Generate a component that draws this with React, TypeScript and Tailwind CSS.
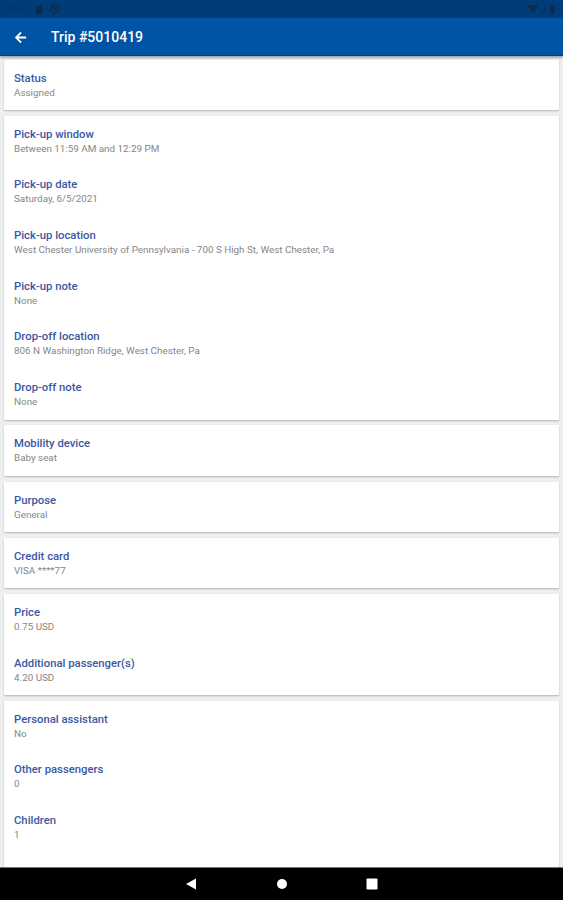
const cards = [
  [["Status", "Assigned"]],
  [
    ["Pick-up window", "Between 11:59 AM and 12:29 PM"],
    ["Pick-up date", "Saturday, 6/5/2021"],
    ["Pick-up location", "West Chester University of Pennsylvania - 700 S High St, West Chester, Pa"],
    ["Pick-up note", "None"],
    ["Drop-off location", "806 N Washington Ridge, West Chester, Pa"],
    ["Drop-off note", "None"],
  ],
  [["Mobility device", "Baby seat"]],
  [["Purpose", "General"]],
  [["Credit card", "VISA ****77"]],
  [
    ["Price", "0.75 USD"],
    ["Additional passenger(s)", "4.20 USD"],
  ],
  [
    ["Personal assistant", "No"],
    ["Other passengers", "0"],
    ["Children", "1"],
  ],
]

function Row({ label, value }: { label: string; value: string }) {
  return (
    <div className="h-[50.7px] pl-[10px] pt-[12px]">
      <div className="text-[11.3px] leading-[14px] font-medium text-[#3a58a3]">{label}</div>
      <div className="text-[9.85px] leading-[14px] text-[#868686]">{value}</div>
    </div>
  )
}

export default function App() {
  return (
    <div className="relative h-[900px] w-[563px] overflow-hidden flex flex-col bg-[#efefef] font-['Roboto',sans-serif]">
      <div className="h-[18px] shrink-0 bg-[#003c78] flex items-center justify-between pl-[7px] pr-[8px]">
        <div className="flex items-center text-[#0f2a4d]">
          <span className="w-[28px] text-[8px] opacity-60">1:16</span>
          <svg width="8" height="9" viewBox="0 0 8 9" fill="currentColor"><path d="M1 2l2-2h4v9H1z" /></svg>
          <svg className="ml-[7px]" width="10" height="10" viewBox="0 0 10 10" fill="none" stroke="currentColor" strokeWidth="1.5"><circle cx="5" cy="5" r="4" /><path d="M3 3l4 4" /></svg>
        </div>
        <div className="flex items-center gap-[2px] text-[#0f2a4d]">
          <svg width="10" height="8" viewBox="0 0 10 8" fill="currentColor"><path d="M0 1q5-2 10 0L5 8z" /></svg>
          <svg width="6" height="7" viewBox="0 0 7 7" fill="currentColor" opacity="0.6"><path d="M7 0v7H0z" /></svg>
          <svg className="ml-[2px]" width="5" height="9" viewBox="0 0 5 9" fill="currentColor"><path d="M1 1h3v8H0V1z" /></svg>
        </div>
      </div>

      <div className="h-[38px] shrink-0 bg-[#0054a5] flex items-center pt-[1px] pl-[12px] shadow-[0_2px_2px_rgba(0,0,0,0.3)] z-10 border-b border-[#003f80]">
        <svg width="17" height="17" viewBox="0 0 24 24" fill="white"><path d="M20 10.5H9l4.6-4.6L12 4l-8 8 8 8 1.6-1.9L9 13.5h11z" /></svg>
        <span className="ml-[22px] text-[14px] font-medium text-white">Trip #5010419</span>
      </div>

      <div className="flex-1 min-h-0 flex flex-col gap-[5.5px] px-[4px] pt-[3.5px] overflow-hidden">
        {cards.map((rows, i) => (
          <div key={i} className={`bg-white rounded-[1px] shadow-[0_1px_2px_rgba(0,0,0,0.25)] ${i === cards.length - 1 ? "flex-1" : "shrink-0"}`}>
            {rows.map(([label, value]) => (
              <Row key={label} label={label} value={value} />
            ))}
          </div>
        ))}
      </div>

      <div className="h-[33px] shrink-0 bg-black flex items-center justify-center gap-[78.5px] border-t border-[#777] z-10">
        <svg width="12" height="12" viewBox="0 0 12 12" fill="white"><path d="M11 0.5v11L1 6z" /></svg>
        <svg width="12" height="12" viewBox="0 0 12 12" fill="white"><circle cx="6" cy="6" r="5" /></svg>
        <svg width="12" height="12" viewBox="0 0 12 12" fill="white"><rect x="0.5" y="0.5" width="11" height="11" rx="1" /></svg>
      </div>
    </div>
  )
}
